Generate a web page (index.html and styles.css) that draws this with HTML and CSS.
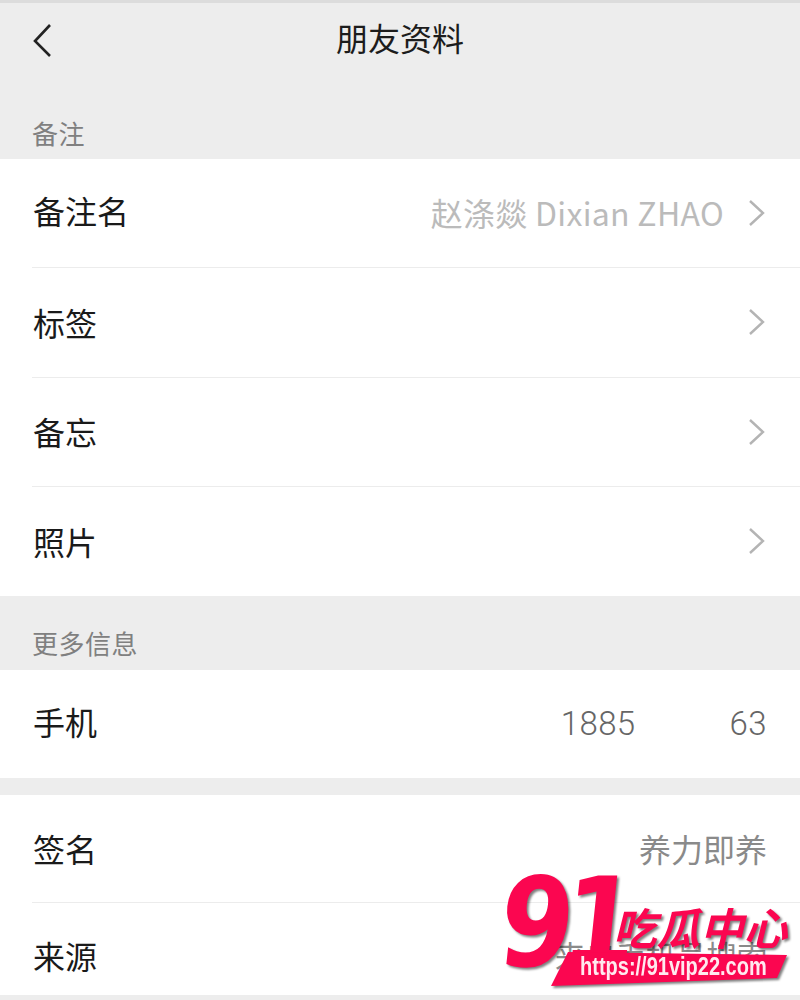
FILE: index.html
```html
<!DOCTYPE html>
<html lang="zh-CN">
<head>
    <meta charset="UTF-8">
    <title>朋友资料</title>
    <link rel="stylesheet" href="styles.css">
</head>
<body>
    <div class="page">
        <div class="topline"></div>
        <header class="navbar">
            <svg class="back" width="24" height="34" viewBox="0 0 24 34">
                <path d="M19 2 L4 18 L19 33" fill="none" stroke="#222" stroke-width="2.6"/>
            </svg>
            <h1 class="title">朋友资料</h1>
        </header>

        <div class="section-label first">备注</div>
        <section class="group">
            <div class="row">
                <span class="name name-top">备注名</span>
                <span class="value light">赵涤燚 Dixian ZHAO</span>
                <svg class="arrow" width="18" height="28" viewBox="0 0 18 28"><path d="M2 2 L15 14 L2 26" fill="none" stroke="#b4b4b4" stroke-width="2.4"/></svg>
            </div>
            <div class="row">
                <span class="name">标签</span>
                <svg class="arrow" width="18" height="28" viewBox="0 0 18 28"><path d="M2 2 L15 14 L2 26" fill="none" stroke="#b4b4b4" stroke-width="2.4"/></svg>
            </div>
            <div class="row">
                <span class="name">备忘</span>
                <svg class="arrow" width="18" height="28" viewBox="0 0 18 28"><path d="M2 2 L15 14 L2 26" fill="none" stroke="#b4b4b4" stroke-width="2.4"/></svg>
            </div>
            <div class="row">
                <span class="name">照片</span>
                <svg class="arrow" width="18" height="28" viewBox="0 0 18 28"><path d="M2 2 L15 14 L2 26" fill="none" stroke="#b4b4b4" stroke-width="2.4"/></svg>
            </div>
        </section>

        <div class="section-label">更多信息</div>
        <section class="group">
            <div class="row phone">
                <span class="name name-top">手机</span>
                <span class="value digits"><span>1885</span><span>63</span></span>
            </div>
        </section>

        <div class="spacer"></div>
        <section class="group">
            <div class="row sign">
                <span class="name">签名</span>
                <span class="value">养力即养</span>
            </div>
            <div class="row source">
                <span class="name">来源</span>
                <span class="value narrow">来自手机号搜索</span>
            </div>
        </section>

        <div class="watermark">
            <span class="wm-num">91</span>
            <span class="wm-cn">吃瓜中心</span>
            <div class="wm-ribbon"><span>https://91vip22.com</span></div>
        </div>
    </div>
</body>
</html>
```

FILE: styles.css
```css
* {
    box-sizing: border-box;
}
body {
    margin: 0;
    background: #ededed;
    font-family: "Noto Sans CJK SC", "Liberation Sans", sans-serif;
}
.page {
    position: relative;
    width: 800px;
    height: 1000px;
    overflow: hidden;
}
.topline {
    height: 3px;
    background: #dcdcdc;
}
.navbar {
    display: flex;
    align-items: center;
    justify-content: center;
    position: relative;
    height: 74px;
    padding-bottom: 6px;
}
.back {
    position: absolute;
    left: 31px;
    top: 20px;
}
.title {
    margin: 0;
    font-size: 32px;
    font-weight: 400;
    color: #1c1c1c;
}
.section-label {
    height: 74px;
    padding: 27px 32px 0;
    font-size: 26px;
    line-height: 40px;
    letter-spacing: 0.5px;
    color: #808080;
}
.section-label.first {
    height: 82px;
    padding-top: 36px;
}
.group {
    background: #fff;
}
.row {
    display: flex;
    align-items: center;
    height: 109.25px;
    margin-left: 32px;
    padding-right: 34px;
    border-bottom: 1px solid #ececec;
}
.group .row:last-child {
    border-bottom: none;
}
.name {
    font-size: 32px;
    color: #1a1a1a;
    margin-right: auto;
    padding: 0 0 1px 1px;
}
.name-top {
    padding-bottom: 6px;
}
.value {
    font-size: 32px;
    color: #8a8a8a;
    margin-right: -1px;
    padding-bottom: 1px;
}
.value.light {
    color: #bbbbbb;
    margin-right: 24px;
    padding-bottom: 2px;
    letter-spacing: 0.3px;
}
.digits {
    display: flex;
    gap: 94px;
    font-family: "Roboto", "Liberation Sans", sans-serif;
    font-size: 33px;
    font-weight: 300;
    color: #666666;
    letter-spacing: 0.4px;
}
.phone {
    height: 108px;
}
.spacer {
    height: 17px;
}
.sign {
    height: 108px;
}
.source {
    height: 92px;
    padding-top: 13px;
}
.value.narrow {
    font-size: 30.3px;
}
.watermark {
    position: absolute;
    left: 500px;
    top: 870px;
    width: 300px;
    height: 130px;
    filter: drop-shadow(2px 2px 1px rgba(0, 0, 0, 0.5));
}
.wm-num {
    position: absolute;
    left: 0;
    top: -22px;
    font-family: "DejaVu Sans", sans-serif;
    font-size: 124px;
    line-height: 150px;
    font-weight: 700;
    letter-spacing: -13px;
    color: #fb0650;
    transform: scaleX(0.86) skewX(-7deg);
    transform-origin: left center;
}
.wm-cn {
    position: absolute;
    left: 113px;
    top: 29px;
    font-size: 43.5px;
    line-height: 56px;
    font-weight: 700;
    font-style: italic;
    white-space: nowrap;
    color: #fb0650;
}
.wm-ribbon {
    position: absolute;
    left: 51px;
    top: 82px;
    width: 236px;
    height: 34px;
    background: #fb0650;
    clip-path: polygon(17px 0, 100% 3px, calc(100% - 10px) 26px, 0 100%);
    display: flex;
    align-items: center;
}
.wm-ribbon span {
    margin-left: 29px;
    padding-bottom: 6px;
    font-family: "Liberation Sans", sans-serif;
    font-size: 25px;
    font-weight: 700;
    color: #ffe9ef;
    transform: scaleX(0.8);
    transform-origin: left center;
    white-space: nowrap;
}
```
